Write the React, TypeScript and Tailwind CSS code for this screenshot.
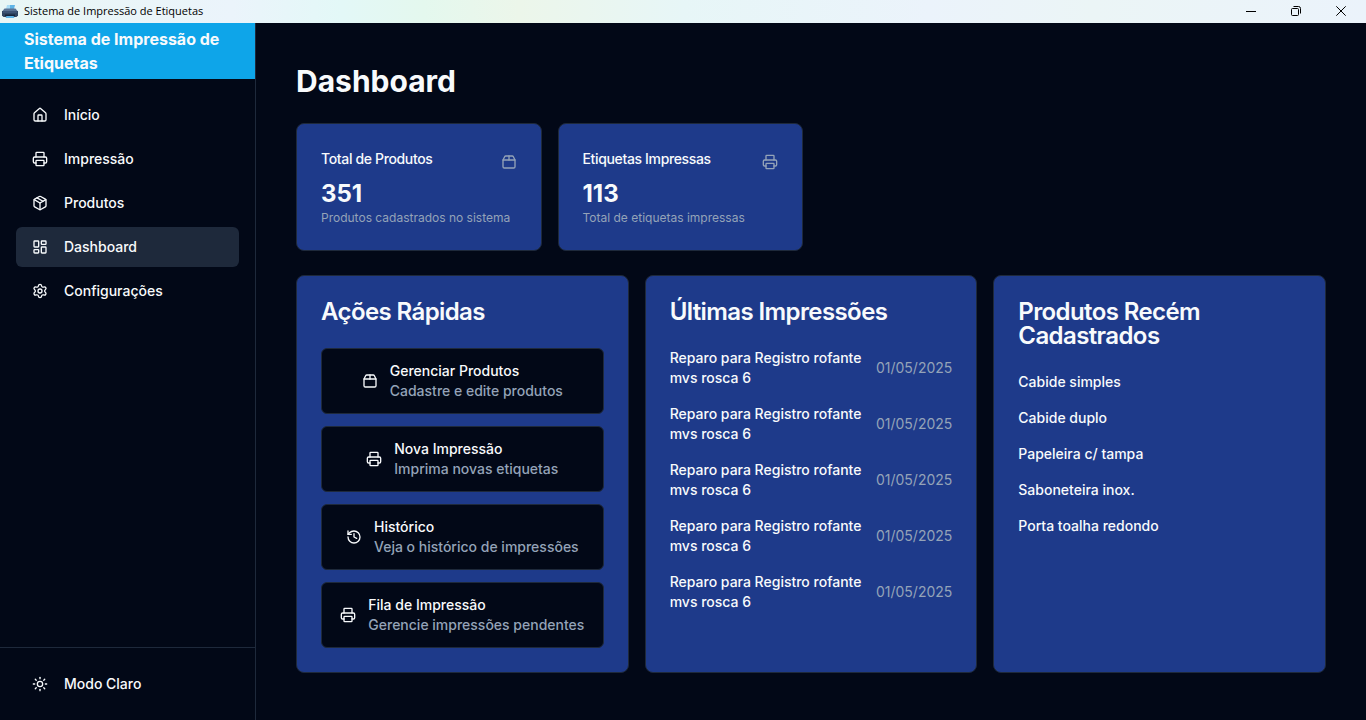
import React from "react";
import {
  History,
  House,
  LayoutDashboard,
  Package,
  Package2,
  Printer,
  Settings,
  Sun,
  type LucideIcon,
} from "lucide-react";

const navItems: { label: string; icon: LucideIcon; active?: boolean }[] = [
  { label: "Início", icon: House },
  { label: "Impressão", icon: Printer },
  { label: "Produtos", icon: Package },
  { label: "Dashboard", icon: LayoutDashboard, active: true },
  { label: "Configurações", icon: Settings },
];

const stats: { title: string; value: string; note: string; icon: LucideIcon }[] = [
  { title: "Total de Produtos", value: "351", note: "Produtos cadastrados no sistema", icon: Package2 },
  { title: "Etiquetas Impressas", value: "113", note: "Total de etiquetas impressas", icon: Printer },
];

const actions: { title: string; note: string; icon: LucideIcon }[] = [
  { title: "Gerenciar Produtos", note: "Cadastre e edite produtos", icon: Package2 },
  { title: "Nova Impressão", note: "Imprima novas etiquetas", icon: Printer },
  { title: "Histórico", note: "Veja o histórico de impressões", icon: History },
  { title: "Fila de Impressão", note: "Gerencie impressões pendentes", icon: Printer },
];

const prints = Array.from({ length: 5 }, (_, id) => ({
  id,
  name: "Reparo para Registro rofante mvs rosca 6",
  date: "01/05/2025",
}));

const products = [
  "Cabide simples",
  "Cabide duplo",
  "Papeleira c/ tampa",
  "Saboneteira inox.",
  "Porta toalha redondo",
];

function AppLogo() {
  return (
    <svg width="16" height="16" viewBox="0 0 16 16" aria-hidden="true">
      <path d="M5 1h7v4H4z" fill="#a9dcf5" />
      <path d="M8 1h5l-1 4H8z" fill="#5fb4e6" />
      <path d="M2.5 4.5h11l2 2.5H.5z" fill="#5a7394" />
      <path d="M0 7h16v4.500L14.500 13h-13L0 11.500z" fill="#2f4562" />
      <path d="M1 7.500h14v1H1z" fill="#4a6386" />
      <path d="M3 10.500h10v1.500H3z" fill="#16243a" />
      <path d="M4.500 12h7l1 2h-9z" fill="#5fb4e6" />
    </svg>
  );
}

function TitleBar() {
  return (
    <header className="flex h-[23px] shrink-0 items-center justify-between bg-[linear-gradient(to_right,#e8f6f5_0%,#ebf4fb_17%,#e3f8f7_25%,#e4f8ee_31%,#ecf6ea_38%,#e7f6f7_50%,#ebf3fb_68%,#ebf5f6_80%,#ebf3fb_100%)] text-black">
      <div className="flex items-center gap-1.5 pl-0.5">
        <AppLogo />
        <span className="font-['Open_Sans','Noto_Sans',sans-serif] text-[11px]">
          Sistema de Impressão de Etiquetas
        </span>
      </div>
      <div className="flex h-full items-center pr-0.5">
        <button type="button" aria-label="Minimizar" className="flex h-full w-[45px] items-center justify-center">
          <svg width="10" height="10" viewBox="0 0 10 10" fill="none" stroke="currentColor" className="mb-0.5">
            <path d="M0 5.5h10" />
          </svg>
        </button>
        <button type="button" aria-label="Restaurar" className="flex h-full w-[45px] items-center justify-center">
          <svg width="10" height="10" viewBox="0 0 10 10" fill="none" stroke="currentColor" className="mb-0.5">
            <rect x=".5" y="2.5" width="7" height="7" rx="1" />
            <path d="M2.5.5h5a2 2 0 0 1 2 2v5" />
          </svg>
        </button>
        <button type="button" aria-label="Fechar" className="flex h-full w-[46px] items-center justify-center">
          <svg width="10" height="10" viewBox="0 0 10 10" fill="none" stroke="currentColor" className="mb-0.5">
            <path d="M.3.3l9.4 9.4M9.7.3.3 9.7" />
          </svg>
        </button>
      </div>
    </header>
  );
}

function Sidebar() {
  return (
    <aside className="flex w-64 shrink-0 flex-col border-r border-[#1e293b]">
      <div className="flex h-14 items-center bg-[#0ea5e9] px-6 font-bold">
        Sistema de Impressão de Etiquetas
      </div>
      <nav className="flex flex-1 flex-col gap-1 p-4">
        {navItems.map(({ label, icon: Icon, active }) => (
          <a
            key={label}
            href="#"
            aria-current={active ? "page" : undefined}
            className={
              active
                ? "flex h-10 items-center gap-4 rounded-md bg-[#1e293b] px-4 text-sm font-medium"
                : "flex h-10 items-center gap-4 rounded-md px-4 text-sm font-medium"
            }
          >
            <Icon size={16} />
            {label}
          </a>
        ))}
      </nav>
      <div className="border-t border-[#1e293b] p-4">
        <button type="button" className="flex h-10 w-full items-center gap-4 rounded-md px-4 text-sm font-medium">
          <Sun size={16} />
          Modo Claro
        </button>
      </div>
    </aside>
  );
}

function Card({ children }: { children: React.ReactNode }) {
  return (
    <section className="rounded-lg border border-[#1e293b] bg-[#1e3a8a] p-6">{children}</section>
  );
}

function CardTitle({ children }: { children: React.ReactNode }) {
  return <h2 className="mb-6 text-2xl leading-none font-semibold tracking-tight">{children}</h2>;
}

export default function App() {
  return (
    <div className="flex h-screen flex-col bg-[#020817] font-['Inter',sans-serif] text-[#f8fafc]">
      <TitleBar />
      <div className="flex min-h-0 flex-1">
        <Sidebar />
        <main className="flex min-w-0 flex-1 flex-col gap-6 overflow-auto p-10">
          <h1 className="text-3xl font-bold">Dashboard</h1>

          <div className="grid grid-cols-4 gap-4">
            {stats.map(({ title, value, note, icon: Icon }) => (
              <Card key={title}>
                <div className="flex items-center justify-between pb-2">
                  <h2 className="text-sm font-medium tracking-tight">{title}</h2>
                  <Icon size={16} className="mt-1.5 text-[#94a3b8]" />
                </div>
                <p className="text-2xl font-bold">{value}</p>
                <p className="text-xs text-[#94a3b8]">{note}</p>
              </Card>
            ))}
          </div>

          <div className="grid grid-cols-3 gap-4">
            <Card>
              <CardTitle>Ações Rápidas</CardTitle>
              <div className="flex flex-col gap-3">
                {actions.map(({ title, note, icon: Icon }) => (
                  <button
                    key={title}
                    type="button"
                    className="flex items-center justify-center gap-3 rounded-md border border-[#1e293b] bg-[#020817] p-3 text-left text-sm font-medium"
                  >
                    <Icon size={16} className="shrink-0" />
                    <span className="flex flex-col">
                      <span>{title}</span>
                      <span className="text-[#94a3b8]">{note}</span>
                    </span>
                  </button>
                ))}
              </div>
            </Card>

            <Card>
              <CardTitle>Últimas Impressões</CardTitle>
              <ul className="flex flex-col gap-4 text-sm">
                {prints.map(({ id, name, date }) => (
                  <li key={id} className="flex items-center justify-between">
                    <span className="font-medium">{name}</span>
                    <time className="text-[#94a3b8]">{date}</time>
                  </li>
                ))}
              </ul>
            </Card>

            <Card>
              <CardTitle>Produtos Recém Cadastrados</CardTitle>
              <ul className="flex flex-col gap-4 text-sm font-medium">
                {products.map((name) => (
                  <li key={name}>{name}</li>
                ))}
              </ul>
            </Card>
          </div>
        </main>
      </div>
    </div>
  );
}
